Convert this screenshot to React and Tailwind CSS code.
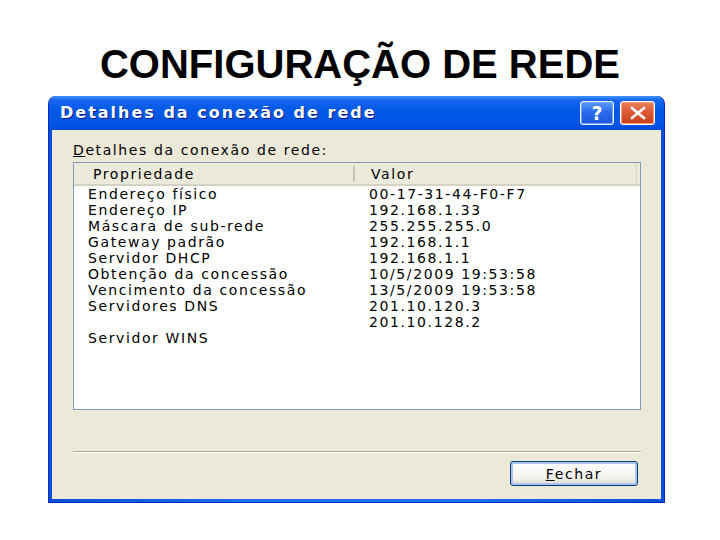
const rows = [
  ['Endereço físico', '00-17-31-44-F0-F7'],
  ['Endereço IP', '192.168.1.33'],
  ['Máscara de sub-rede', '255.255.255.0'],
  ['Gateway padrão', '192.168.1.1'],
  ['Servidor DHCP', '192.168.1.1'],
  ['Obtenção da concessão', '10/5/2009 19:53:58'],
  ['Vencimento da concessão', '13/5/2009 19:53:58'],
  ['Servidores DNS', '201.10.120.3'],
  ['', '201.10.128.2'],
  ['Servidor WINS', ''],
];

function TitleButtons() {
  return (
    <div className="flex items-center gap-[6px]">
      <div className="w-[34px] h-[24px] rounded-[3px] border border-white flex items-center justify-center bg-[linear-gradient(to_bottom,#5d9bfb,#2a6cef_45%,#1a55dc)] shadow-[inset_0_0_0_1px_#6fa4ff]">
        <span className="text-white font-bold text-[19px] leading-none font-['DejaVu_Sans',sans-serif]">?</span>
      </div>
      <div className="w-[35px] h-[24px] rounded-[3px] border border-white flex items-center justify-center bg-[linear-gradient(to_bottom,#e9825f,#dc5a32_45%,#c8401c)] shadow-[inset_0_0_0_1px_#f0a080]">
        <svg width="18" height="14" viewBox="0 0 18 14">
          <path d="M3 2 L15 12 M15 2 L3 12" stroke="white" strokeWidth="2.6" strokeLinecap="square" />
        </svg>
      </div>
    </div>
  );
}

export default function App() {
  return (
    <div className="w-[720px] h-[540px] bg-white flex flex-col overflow-hidden">
      <h1 className="mt-[44px] text-center text-[40px] leading-[40px] font-bold text-black font-['Liberation_Sans',Arial,sans-serif]">
        CONFIGURAÇÃO DE REDE
      </h1>

      <div className="ml-[48px] mt-[12px] w-[617px] h-[407px] flex flex-col rounded-t-[8px] border border-t-0 border-[#0a2bc0] bg-[linear-gradient(to_right,#0a4fd8,#1a6cf0_30%,#1a6cf0_70%,#0a4fd8)] px-[3px] pb-[3px] font-['DejaVu_Sans',sans-serif]">
        <div className="-mx-[3px] h-[34px] shrink-0 rounded-t-[8px] flex items-center justify-between pl-[11px] pr-[9px] bg-[linear-gradient(to_bottom,#3f93fb_0%,#1665ee_12%,#0058e6_45%,#0055e5_85%,#0048d6_100%)]">
          <span className="text-white font-bold text-[16px] leading-[18px] tracking-[2px] [text-shadow:1px_1px_0_#0a1a80]">
            Detalhes da conexão de rede
          </span>
          <TitleButtons />
        </div>

        <div className="flex-1 bg-[#ece9d8] flex flex-col pl-[21px] pr-[20px] text-[14px] leading-[16px] tracking-[1.6px] text-black">
          <div className="pt-[12px]">
            <span className="underline">D</span>etalhes da conexão de rede:
          </div>

          <div className="mt-[4px] h-[248px] border border-[#7f9db9] bg-white flex flex-col">
            <div className="h-[23px] shrink-0 grid grid-cols-[281px_1fr] bg-[#ebeadb] border-b-2 border-[#d6d2c2]">
              <div className="flex items-center pl-[19px] border-r-2 border-[#c7c5b2] mt-[3px] mb-[3px]">
                Propriedade
              </div>
              <div className="flex items-center pl-[16px] mr-[3px] border-r border-[#d6d2c2]">Valor</div>
            </div>
            <div className="flex flex-col">
              {rows.map(([k, v], i) => (
                <div key={i} className="grid grid-cols-[281px_1fr] h-[16px]">
                  <div className="pl-[14px] whitespace-nowrap">{k}</div>
                  <div className="pl-[14px] whitespace-nowrap">{v}</div>
                </div>
              ))}
            </div>
          </div>

          <div className="mt-[41px] h-[2px] border-t border-[#aca899] border-b border-b-white" />

          <div className="mt-[8px] flex justify-end pr-[3px]">
            <div className="w-[128px] h-[25px] rounded-[3px] border border-[#003c74] bg-[linear-gradient(to_bottom,#ffffff,#f3f2ee_70%,#dcd8cc)] shadow-[inset_0_0_0_2px_#a9c4f0] flex items-center justify-center">
              <span>
                <span className="underline">F</span>echar
              </span>
            </div>
          </div>
        </div>
      </div>
    </div>
  );
}
